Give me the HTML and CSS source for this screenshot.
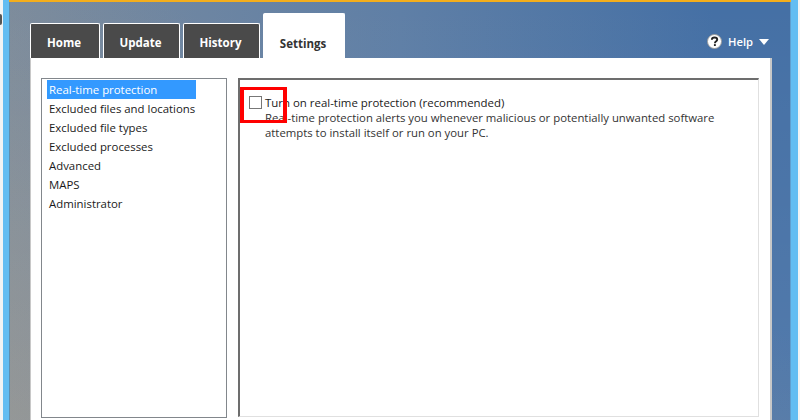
FILE: index.html
```html
<!DOCTYPE html>
<html lang="en">
<head>
<meta charset="utf-8">
<title>Windows Defender Settings</title>
<link rel="stylesheet" href="styles.css">
</head>
<body>
<div class="frame">
  <span class="edge-mark"></span>
  <div class="window">
    <div class="header">
      <nav class="tabs">
        <div class="tab tab-home">Home</div>
        <div class="tab">Update</div>
        <div class="tab">History</div>
        <div class="tab tab-active">Settings</div>
      </nav>
      <div class="help">
        <svg class="help-icon" width="15" height="15" viewBox="0 0 16 16"><circle cx="8" cy="8" r="7.5" fill="#fff" stroke="#9a9a9a" stroke-width="1"/><path d="M5.2 6.2c0-1.6 1.2-2.5 2.9-2.5s2.8.9 2.8 2.2c0 1-.6 1.5-1.4 2.1-.7.5-1 .8-1 1.5v.3" fill="none" stroke="#222" stroke-width="2"/><rect x="7.4" y="10.8" width="2" height="2" fill="#222"/></svg>
        <span class="help-label">Help</span>
        <span class="caret"></span>
      </div>
    </div>
    <main class="panel">
      <ul class="menu">
        <li class="menu-item menu-selected">Real-time protection</li>
        <li class="menu-item">Excluded files and locations</li>
        <li class="menu-item">Excluded file types</li>
        <li class="menu-item">Excluded processes</li>
        <li class="menu-item">Advanced</li>
        <li class="menu-item">MAPS</li>
        <li class="menu-item">Administrator</li>
      </ul>
      <section class="content">
        <div class="option">
          <span class="checkbox-wrap">
            <span class="checkbox"></span>
            <span class="highlight"></span>
          </span>
          <div class="option-text">
            <div class="option-title">Turn on real-time protection (recommended)</div>
            <div class="option-desc">Real-time protection alerts you whenever malicious or potentially unwanted software attempts to install itself or run on your PC.</div>
          </div>
        </div>
      </section>
    </main>
  </div>
</div>
</body>
</html>
```
FILE: styles.css
```css
* { box-sizing: border-box; }
html, body { margin: 0; padding: 0; }
body {
  width: 800px;
  height: 420px;
  overflow: hidden;
  background: #fff;
  font-family: "Open Sans", "Noto Sans", sans-serif;
}
.frame {
  position: relative;
  height: 420px;
  padding: 0 2px 0 3px;
  background: #f2f4f5;
}
.edge-mark {
  position: absolute;
  left: 0;
  top: 14px;
  width: 2px;
  height: 11px;
  border-radius: 0 2px 2px 0;
  background: #555;
}
.window {
  height: 100%;
  border-left: 6px solid #63bdf2;
  border-right: 7px solid #63bdf2;
  background:
    linear-gradient(to top right, rgba(186, 159, 118, .3), rgba(186, 159, 118, 0) 60%),
    linear-gradient(to bottom, rgba(255, 255, 255, 0), rgba(255, 255, 255, .08)),
    linear-gradient(90deg, #7a8b9e, #5f7fa6 50%, #4570a5 90%);
  box-shadow: inset 1px 0 #5f8fb0, inset -1px 0 #5f9fd0;
  padding: 13px 0 0 21px;
  display: flex;
  flex-direction: column;
  position: relative;
}
.window::before {
  content: "";
  position: absolute;
  left: 0;
  right: 0;
  top: 0;
  height: 2px;
  background: #f4ae1c;
}
.header {
  display: flex;
  align-items: flex-end;
  justify-content: space-between;
  height: 45px;
  padding-right: 22px;
}
.tabs { display: flex; gap: 3px; align-items: flex-end; }
.tab {
  width: 77px;
  height: 35px;
  padding-right: 2px;
  background: #4a4a4a;
  border: 1px solid #fff;
  border-bottom: 0;
  border-radius: 2px 2px 0 0;
  color: #fff;
  font-size: 11.5px;
  font-weight: 700;
  text-align: center;
  line-height: 38px;
}
.tab-home { width: 70px; }
.tab-active {
  width: 82px;
  height: 45px;
  background: #fff;
  color: #333;
  line-height: 59px;
}
.help {
  display: flex;
  align-items: center;
  color: #fff;
  font-size: 11.2px;
  font-weight: 600;
  margin-bottom: 9px;
}
.help-icon { display: block; margin-right: 6px; }
.help-label { margin-right: 6px; }
.caret {
  width: 0;
  height: 0;
  border-left: 5px solid transparent;
  border-right: 5px solid transparent;
  border-top: 6px solid #fff;
}
.panel {
  flex: 1;
  width: 742px;
  background: #fff;
  border-left: 1px solid #c8c8c8;
  border-right: 2px solid #c8c8c8;
  padding: 20px 11px 0 10px;
  display: flex;
  gap: 11px;
}
.menu {
  list-style: none;
  margin: 0;
  padding: 1px 0 0 5px;
  width: 186px;
  height: 340px;
  border: 1px solid #82878c;
}
.menu-item {
  height: 19px;
  width: 149px;
  padding-left: 2px;
  font-size: 11.4px;
  line-height: 19px;
  color: #1a1a1a;
  white-space: nowrap;
}
.menu-selected { background: #3399ff; color: #fff; }
.content {
  flex: 1;
  height: 339px;
  border-top: 2px solid #6d6d6d;
  border-left: 2px solid #6d6d6d;
  border-right: 1px solid #e0e0e0;
  border-bottom: 1px solid #e0e0e0;
  padding: 15px 0 0 9px;
}
.option { display: flex; gap: 3px; }
.checkbox-wrap { position: relative; display: block; width: 13px; height: 13px; margin-top: 1px; }
.checkbox { display: block; width: 13px; height: 13px; border: 1px solid #777; background: #fff; }
.highlight {
  position: absolute;
  left: -9px;
  top: -9px;
  width: 47px;
  height: 36px;
  border-style: solid;
  border-color: #f00;
  border-width: 3px 4px;
}
.option-text { width: 470px; font-size: 11.45px; line-height: 15px; color: #1a1a1a; }
.option-title { color: #1a1a1a; }
.option-desc { font-size: 11.35px; color: #333; }
```
